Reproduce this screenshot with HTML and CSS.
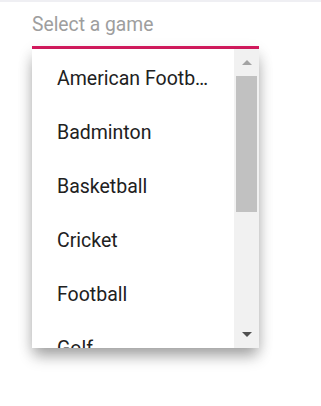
FILE: index.html
```html
<!DOCTYPE html>
<html>
<head>
<meta charset="utf-8">
<link rel="stylesheet" href="styles.css">
</head>
<body>
<div class="topline"></div>
<div class="field">
  <div class="input">Select a game</div>
  <div class="underline"></div>
  <div class="popup">
    <ul class="list">
      <li>American Footb…</li>
      <li>Badminton</li>
      <li>Basketball</li>
      <li>Cricket</li>
      <li>Football</li>
      <li>Golf</li>
    </ul>
    <div class="scrollbar">
      <div class="btn up"><div class="tri-up"></div></div>
      <div class="track"><div class="thumb"></div></div>
      <div class="btn down"><div class="tri-down"></div></div>
    </div>
  </div>
</div>
</body>
</html>
```

FILE: styles.css
```css
html, body {
  margin: 0;
  padding: 0;
  background: #ffffff;
  font-family: Roboto, "Liberation Sans", sans-serif;
}
body {
  min-height: 406px;
  overflow: hidden;
}
.topline {
  height: 2px;
  background: #efeff3;
}
.field {
  margin-left: 32px;
  width: 227px;
}
.input {
  height: 44px;
  box-sizing: border-box;
  padding-top: 11px;
  font-size: 19.3px;
  line-height: 24px;
  color: #9e9e9e;
}
.underline {
  height: 3px;
  background: #d81b60;
}
.popup {
  display: flex;
  height: 299px;
  background: #ffffff;
  box-shadow: 0 10px 14px -2px rgba(0,0,0,0.3), 0 3px 14px rgba(0,0,0,0.14);
  overflow: hidden;
}
.list {
  flex: 1;
  margin: 0;
  padding: 3px 0 0 0;
  list-style: none;
  overflow: hidden;
}
.list li {
  height: 54px;
  line-height: 54px;
  padding-left: 25px;
  font-size: 19.5px;
  color: #212121;
  white-space: nowrap;
}
.scrollbar {
  width: 25px;
  background: #f1f1f1;
  display: flex;
  flex-direction: column;
}
.btn {
  display: flex;
  align-items: center;
  justify-content: center;
}
.up { height: 27px; }
.down { height: 27px; }
.tri-up {
  width: 0; height: 0;
  border-left: 5px solid transparent;
  border-right: 5px solid transparent;
  border-bottom: 5px solid #a3a3a3;
}
.tri-down {
  width: 0; height: 0;
  border-left: 5px solid transparent;
  border-right: 5px solid transparent;
  border-top: 5px solid #505050;
}
.track {
  flex: 1;
  padding: 0 2px;
}
.thumb {
  height: 136px;
  background: #c1c1c1;
}
```
